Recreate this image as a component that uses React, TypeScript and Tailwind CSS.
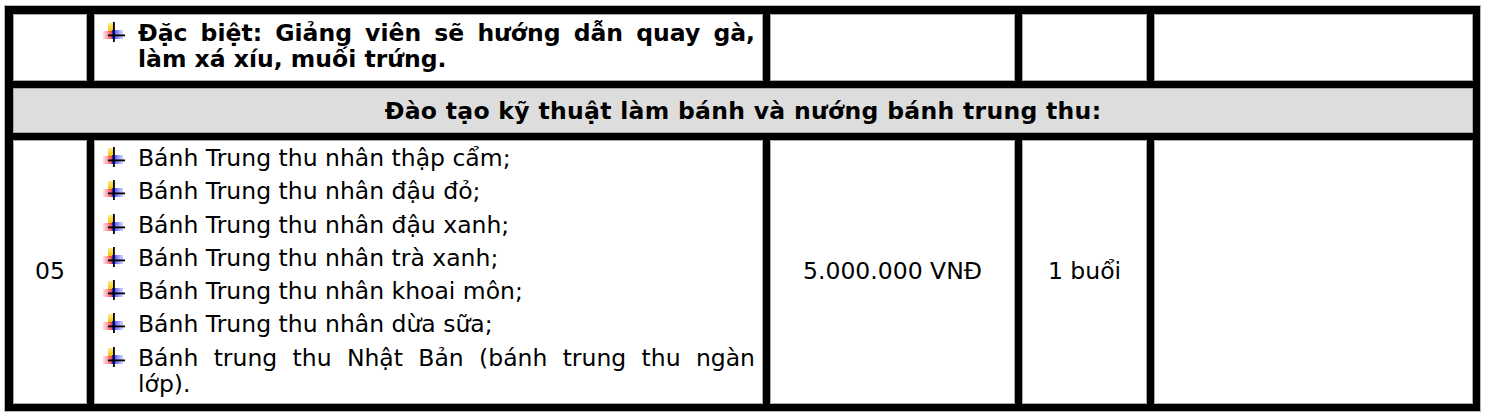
import React from 'react';

const ITEMS = [
  'Bánh Trung thu nhân thập cẩm;',
  'Bánh Trung thu nhân đậu đỏ;',
  'Bánh Trung thu nhân đậu xanh;',
  'Bánh Trung thu nhân trà xanh;',
  'Bánh Trung thu nhân khoai môn;',
  'Bánh Trung thu nhân dừa sữa;',
];

function Bullet() {
  return (
    <svg width="23" height="22" viewBox="0 0 23 22" className="mt-[2px] shrink-0">
      <defs>
        <linearGradient id="rd" x1="0" x2="1" y1="0" y2="0">
          <stop offset="0" stopColor="#ff8090" stopOpacity="0.25" />
          <stop offset="1" stopColor="#f0243a" />
        </linearGradient>
        <linearGradient id="bl" x1="0" x2="1" y1="0" y2="0">
          <stop offset="0" stopColor="#1e1eff" />
          <stop offset="1" stopColor="#9a9aff" stopOpacity="0.45" />
        </linearGradient>
        <linearGradient id="yl" x1="0" x2="0" y1="0" y2="1">
          <stop offset="0" stopColor="#ffe98a" />
          <stop offset="1" stopColor="#f2c200" />
        </linearGradient>
      </defs>
      <rect x="6" y="1" width="7" height="9" fill="url(#yl)" />
      <rect x="1" y="9" width="10" height="8" fill="url(#rd)" />
      <rect x="10" y="8" width="11" height="9" fill="url(#bl)" />
      <rect x="11" y="0" width="1.8" height="20" fill="#000" />
      <rect x="6" y="12.5" width="17" height="1.8" fill="#000" />
    </svg>
  );
}

function Cell({ className = '', children }: { className?: string; children?: React.ReactNode }) {
  return <div className={'border border-[#a8a8a8] bg-white ' + className}>{children}</div>;
}

export default function App() {
  return (
    <div className="min-h-screen bg-white pl-[4px] pt-[5px] font-['DejaVu_Sans',Verdana,sans-serif] text-[23.5px] text-black">
      <div className="inline-grid grid-cols-[74px_669px_245px_125px_319px] grid-rows-[67px_45px_264px] gap-[7px] border border-[#b4b4b4] bg-black pb-[7px] pl-[8px] pr-[7px] pt-[8px]">
        {/* row 1 */}
        <Cell />
        <Cell className="flex pl-[7px] pt-[5px] font-bold leading-[26px]">
          <Bullet />
          <div className="ml-[13px] w-[617px]">
            <span className="block text-justify [text-align-last:justify]">
              Đặc biệt: Giảng viên sẽ hướng dẫn quay gà,
            </span>
            <span className="block">làm xá xíu, muối trứng.</span>
          </div>
        </Cell>
        <Cell />
        <Cell />
        <Cell />

        {/* section header */}
        <div className="col-span-5 border border-[#a8a8a8] bg-[#dddddd] pt-[9px] text-center font-bold leading-[26px] tracking-[0.3px]">
          Đào tạo kỹ thuật làm bánh và nướng bánh trung thu:
        </div>

        {/* row 05 */}
        <Cell className="flex items-center justify-center">05</Cell>
        <Cell className="flex flex-col gap-[7.3px] pl-[7px] pt-[4px] leading-[26px]">
          {ITEMS.map((t) => (
            <div key={t} className="flex">
              <Bullet />
              <div className="ml-[13px] w-[617px]">{t}</div>
            </div>
          ))}
          <div className="flex">
            <Bullet />
            <div className="ml-[13px] w-[617px]">
              <span className="block text-justify [text-align-last:justify]">
                Bánh trung thu Nhật Bản (bánh trung thu ngàn
              </span>
              <span className="block">lớp).</span>
            </div>
          </div>
        </Cell>
        <Cell className="flex items-center justify-center">5.000.000 VNĐ</Cell>
        <Cell className="flex items-center justify-center">1 buổi</Cell>
        <Cell />
      </div>
    </div>
  );
}
